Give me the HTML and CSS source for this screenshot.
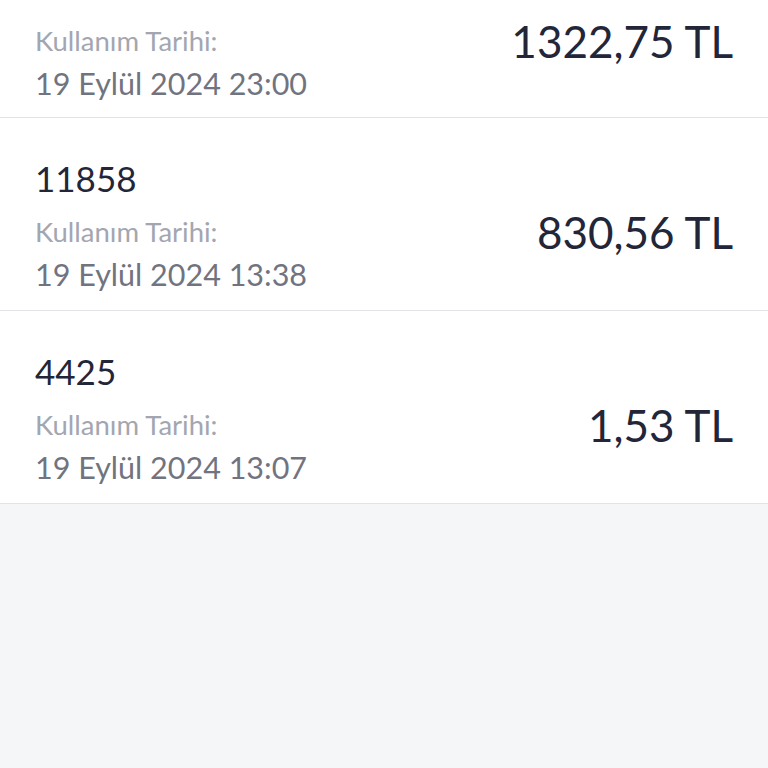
FILE: index.html
```html
<!DOCTYPE html>
<html lang="tr">
  <head>
    <meta charset="UTF-8" />
    <title>Kullanımlar</title>
    <link rel="stylesheet" href="styles.css">
  </head>
  <body>
    <div class="list">
      <!-- first row is scrolled, its name is out of view -->
      <div class="usage usage-cut">
        <div class="usage-body">
          <div class="usage-dates">
            <div class="usage-label">Kullanım Tarihi:</div>
            <div class="usage-date">19 Eylül 2024 23:00</div>
          </div>
          <div class="usage-amount">1322,75 TL</div>
        </div>
      </div>

      <div class="usage">
        <div class="usage-name">11858</div>
        <div class="usage-body">
          <div class="usage-dates">
            <div class="usage-label">Kullanım Tarihi:</div>
            <div class="usage-date">19 Eylül 2024 13:38</div>
          </div>
          <div class="usage-amount">830,56 TL</div>
        </div>
      </div>

      <div class="usage">
        <div class="usage-name">4425</div>
        <div class="usage-body">
          <div class="usage-dates">
            <div class="usage-label">Kullanım Tarihi:</div>
            <div class="usage-date">19 Eylül 2024 13:07</div>
          </div>
          <div class="usage-amount">1,53 TL</div>
        </div>
      </div>
    </div>
  </body>
</html>
```

FILE: styles.css
```css
body {
  margin: 0;
  background: #f5f6f8;
  font-family: Lato, "Noto Sans", sans-serif;
  color: #222638;
}

.usage {
  background: #fff;
  padding: 40px 35px 16px;
  border-bottom: 1px solid #e2e3e8;
}

.usage-cut {
  padding-top: 21px;
  padding-bottom: 14px;
}

.usage-name {
  font-size: 35px;
  line-height: 40px;
  margin-bottom: 14px;
}

.usage-body {
  display: flex;
  justify-content: space-between;
  align-items: flex-start;
}

.usage-label {
  font-size: 27.5px;
  line-height: 40px;
  color: #a3a6b1;
}

.usage-date {
  font-size: 30.5px;
  line-height: 40px;
  margin-top: 2px;
  color: #71747f;
}

.usage-amount {
  font-size: 44px;
  line-height: 40px;
}
```
